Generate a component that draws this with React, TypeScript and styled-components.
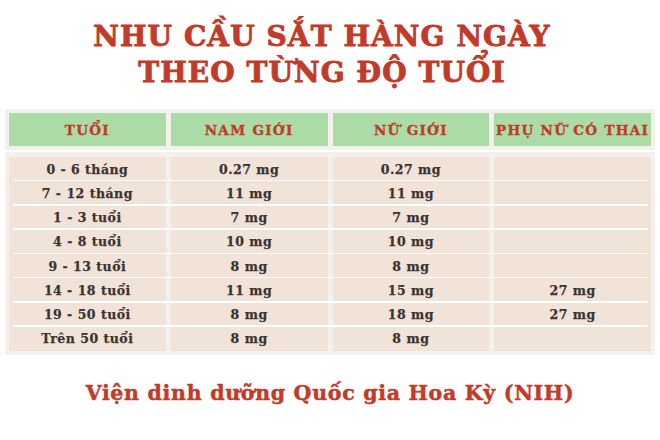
import React from 'react'
import styled, { createGlobalStyle } from 'styled-components'

const GlobalStyle = createGlobalStyle`
  html, body {
    margin: 0;
    padding: 0;
    background: #ffffff;
  }
`

const RED = '#c13b2a'
const SLAB = `'DejaVu Serif', 'Liberation Serif', serif`

interface IronRow {
  age: string
  male: string
  female: string
  pregnant?: string
}

const rows: IronRow[] = [
  { age: '0 - 6 tháng', male: '0.27 mg', female: '0.27 mg' },
  { age: '7 - 12 tháng', male: '11 mg', female: '11 mg' },
  { age: '1 - 3 tuổi', male: '7 mg', female: '7 mg' },
  { age: '4 - 8 tuổi', male: '10 mg', female: '10 mg' },
  { age: '9 - 13 tuổi', male: '8 mg', female: '8 mg' },
  { age: '14 - 18 tuổi', male: '11 mg', female: '15 mg', pregnant: '27 mg' },
  { age: '19 - 50 tuổi', male: '8 mg', female: '18 mg', pregnant: '27 mg' },
  { age: 'Trên 50 tuổi', male: '8 mg', female: '8 mg' },
]

const headers = ['TUỔI', 'NAM GIỚI', 'NỮ GIỚI', 'PHỤ NỮ CÓ THAI']

export default function App() {
  return <Page>
    <GlobalStyle />
    <Title>
      <div>NHU CẦU SẮT HÀNG NGÀY</div>
      <div>THEO TỪNG ĐỘ TUỔI</div>
    </Title>

    <Table>
      <HeaderPanel>
        {headers.map((h) => <HeaderCell key={h}>{h}</HeaderCell>)}
      </HeaderPanel>

      <BodyPanel>
        {rows.map((r, i) => (
          <Row key={r.age} $last={i === rows.length - 1}>
            <Cell>{r.age}</Cell>
            <Cell>{r.male}</Cell>
            <Cell>{r.female}</Cell>
            <Cell>{r.pregnant ?? ''}</Cell>
          </Row>
        ))}
      </BodyPanel>
    </Table>

    <Footer>Viện dinh dưỡng Quốc gia Hoa Kỳ (NIH)</Footer>
  </Page>
}

const Page = styled.div`
  width: 660px;
  height: 440px;
  background: #ffffff;
  display: flex;
  flex-direction: column;
  overflow: hidden;
`

const Title = styled.h1`
  margin: 19px 0 0;
  padding-right: 16px;
  text-align: center;
  font-family: ${SLAB};
  font-weight: 700;
  font-size: 28px;
  line-height: 36px;
  letter-spacing: 1.1px;
  color: ${RED};
  -webkit-text-stroke: 0.9px ${RED};
`

const Table = styled.div`
  margin: 18px 5px 0;
  display: flex;
  flex-direction: column;
  gap: 2px;
`

const HeaderPanel = styled.div`
  background: #f4f1ec;
  padding: 4px;
  display: grid;
  grid-template-columns: repeat(4, 1fr);
  gap: 5px;
`

const HeaderCell = styled.div`
  height: 33px;
  background: #acdca5;
  display: flex;
  align-items: center;
  justify-content: center;
  font-family: ${SLAB};
  font-weight: 700;
  font-size: 13.5px;
  letter-spacing: 1.3px;
  color: ${RED};
  -webkit-text-stroke: 0.35px ${RED};
  white-space: nowrap;
`

const BodyPanel = styled.div`
  background: #f4f1ec;
  padding: 5px 4px 4px;
  display: grid;
  grid-template-rows: repeat(8, 24.25px);
`

const Row = styled.div<{ $last: boolean }>`
  position: relative;
  display: grid;
  grid-template-columns: repeat(4, 1fr);
  gap: 5px;

  &::after {
    content: '';
    display: ${({ $last }) => ($last ? 'none' : 'block')};
    position: absolute;
    left: 4px;
    right: 3px;
    bottom: 0;
    height: 1.5px;
    background: #ffffff;
  }
`

const Cell = styled.div`
  background: #f2e3d9;
  display: flex;
  align-items: center;
  justify-content: center;
  font-family: ${SLAB};
  font-weight: 700;
  font-size: 12.5px;
  letter-spacing: 0.5px;
  color: #3b3431;
  -webkit-text-stroke: 0.25px #3b3431;
  white-space: nowrap;
`

const Footer = styled.div`
  margin-top: 26px;
  text-align: center;
  font-family: ${SLAB};
  font-weight: 700;
  font-size: 20.5px;
  letter-spacing: 0.7px;
  color: ${RED};
  -webkit-text-stroke: 0.5px ${RED};
`
